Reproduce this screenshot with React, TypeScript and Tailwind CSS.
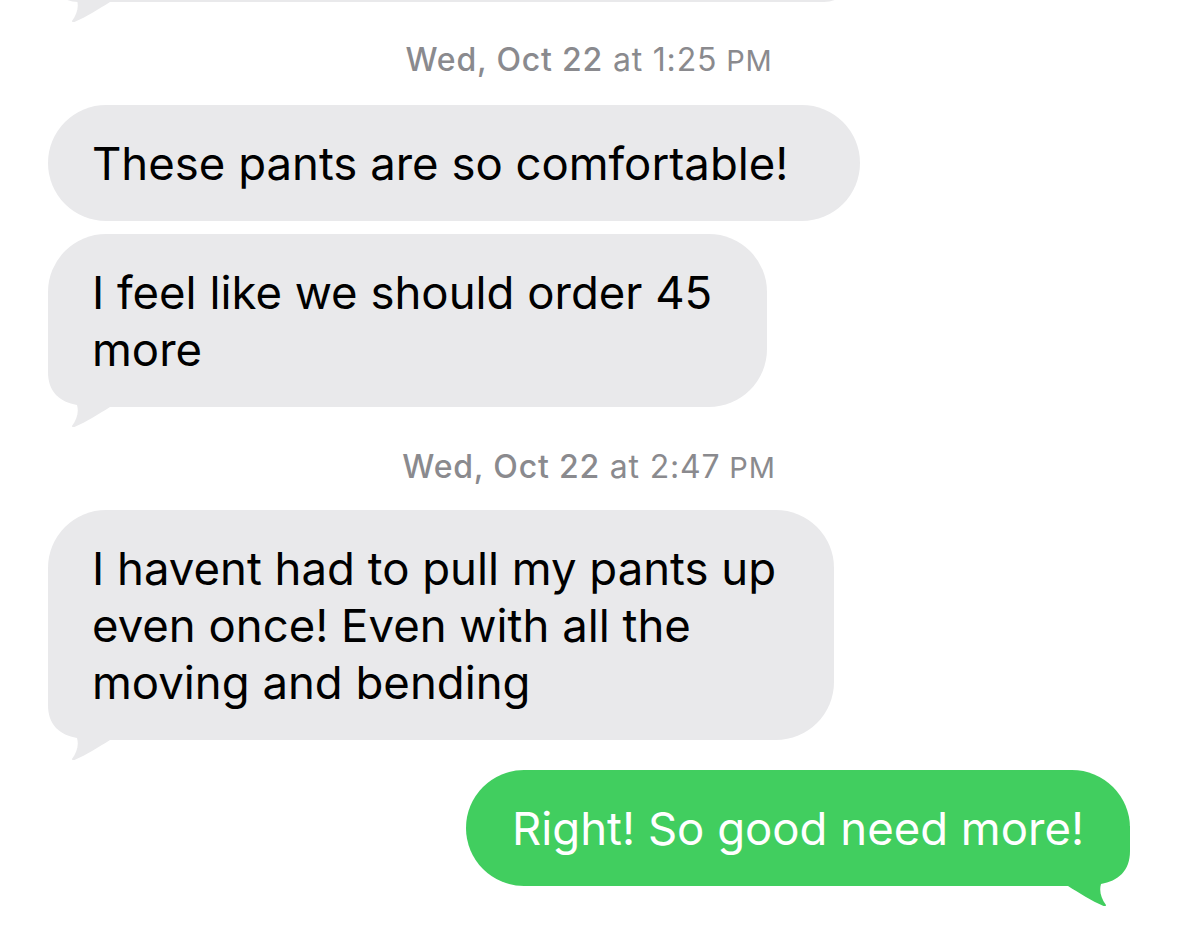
import React from 'react';

const GREY = '#e9e9eb';
const GREEN = '#41ce5f';

const Tail: React.FC<{ color: string; side: 'left' | 'right' }> = ({ color, side }) => (
  <svg
    className={`absolute bottom-[-20px] ${side === 'left' ? 'left-0' : 'right-0 -scale-x-100'}`}
    width="66"
    height="80"
    viewBox="0 0 66 80"
  >
    <path
      d="M0,0 L0,25 C0,45 12,55 29,58 C31,65 29,72 24,79 C24,80.5 25.5,80.6 27,79.8 C38,75 51,67 62,60 L66,60 L66,0 Z"
      fill={color}
    />
  </svg>
);

interface BubbleProps {
  lines: string[];
  width: string;
  incoming?: boolean;
  tail?: boolean;
  className?: string;
}

const Bubble: React.FC<BubbleProps> = ({ lines, width, incoming = true, tail = false, className = '' }) => (
  <div
    className={`relative whitespace-nowrap rounded-[58px] py-[29.5px] text-[45.5px] leading-[57px] ${width} ${
      incoming ? 'self-start bg-[#e9e9eb] pl-[44px] text-black' : 'self-end bg-[#41ce5f] pl-[46px] text-white'
    } ${className}`}
  >
    {tail && <Tail color={incoming ? GREY : GREEN} side={incoming ? 'left' : 'right'} />}
    <span className="relative">
      {lines.map((line, i) => (
        <React.Fragment key={i}>
          {i > 0 && <br />}
          {line}
        </React.Fragment>
      ))}
    </span>
  </div>
);

const Timestamp: React.FC<{ date: string; time: string; className?: string }> = ({ date, time, className = '' }) => (
  <div className={`text-center text-[32px] leading-[38px] tracking-[0.8px] text-[#8a8a8e] ${className}`}>
    <span className="font-medium">{date}</span> at {time}
    <span className="text-[29px]"> PM</span>
  </div>
);

export default function App() {
  return (
    <div className="w-[1179px] h-[934px] overflow-hidden bg-white font-['Inter','Liberation_Sans',sans-serif]">
      <div className="flex flex-col pl-[48px] pr-[49px]">
        <div className="relative mt-[-58px] h-[60px] w-[806px] self-start rounded-[58px] bg-[#e9e9eb]">
          <Tail color={GREY} side="left" />
        </div>

        <Timestamp date="Wed, Oct 22" time="1:25" className="mt-[39px]" />

        <Bubble className="mt-[25px]" width="w-[812px]" lines={['These pants are so comfortable!']} />
        <Bubble
          className="mt-[13px]"
          width="w-[719px]"
          tail
          lines={['I feel like we should order 45', 'more']}
        />

        <Timestamp date="Wed, Oct 22" time="2:47" className="mt-[41px]" />

        <Bubble
          className="mt-[23px]"
          width="w-[786px]"
          tail
          lines={['I havent had to pull my pants up', 'even once! Even with all the', 'moving and bending']}
        />

        <Bubble
          className="mt-[30px]"
          width="w-[664px]"
          incoming={false}
          tail
          lines={['Right! So good need more!']}
        />
      </div>
    </div>
  );
}
